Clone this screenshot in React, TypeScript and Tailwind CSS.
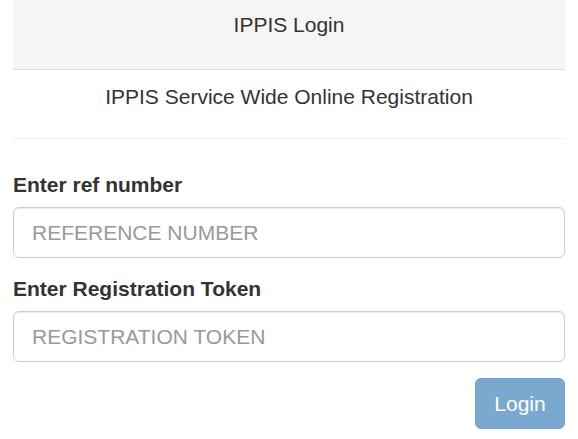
import React from 'react';

const Field = ({ label, placeholder }: { label: string; placeholder: string }) => (
  <div className="mb-[16px]">
    <label className="block font-bold mb-[7px]">{label}</label>
    <input
      type="text"
      placeholder={placeholder}
      className="block w-full h-[51px] border border-[#ccc] rounded-[6px] px-[18px] text-[21px] text-[#555] placeholder:text-[#999] shadow-[inset_0_1px_1px_rgba(0,0,0,0.075)] outline-none"
    />
  </div>
);

const App = () => {
  return (
    <div className="mx-[13px] font-['Liberation_Sans',Arial,sans-serif] text-[21px] leading-[30px] text-[#333] bg-white">
      <div className="h-[70px] bg-[#f5f5f5] border-b border-[#ddd] pt-[10px] text-center">
        IPPIS Login
      </div>
      <div className="h-[69px] border-b border-[#eee] pt-[12px] text-center">
        IPPIS Service Wide Online Registration
      </div>
      <form className="mt-[31px]" onSubmit={(e) => e.preventDefault()}>
        <Field label="Enter ref number" placeholder="REFERENCE NUMBER" />
        <Field label="Enter Registration Token" placeholder="REGISTRATION TOKEN" />
        <div className="flex justify-end">
          <button
            type="submit"
            disabled
            className="w-[90px] h-[51px] bg-[#7aa9d0] border border-[#77a0c4] rounded-[6px] text-white text-[21px]"
          >
            Login
          </button>
        </div>
      </form>
    </div>
  );
};

export default App;
